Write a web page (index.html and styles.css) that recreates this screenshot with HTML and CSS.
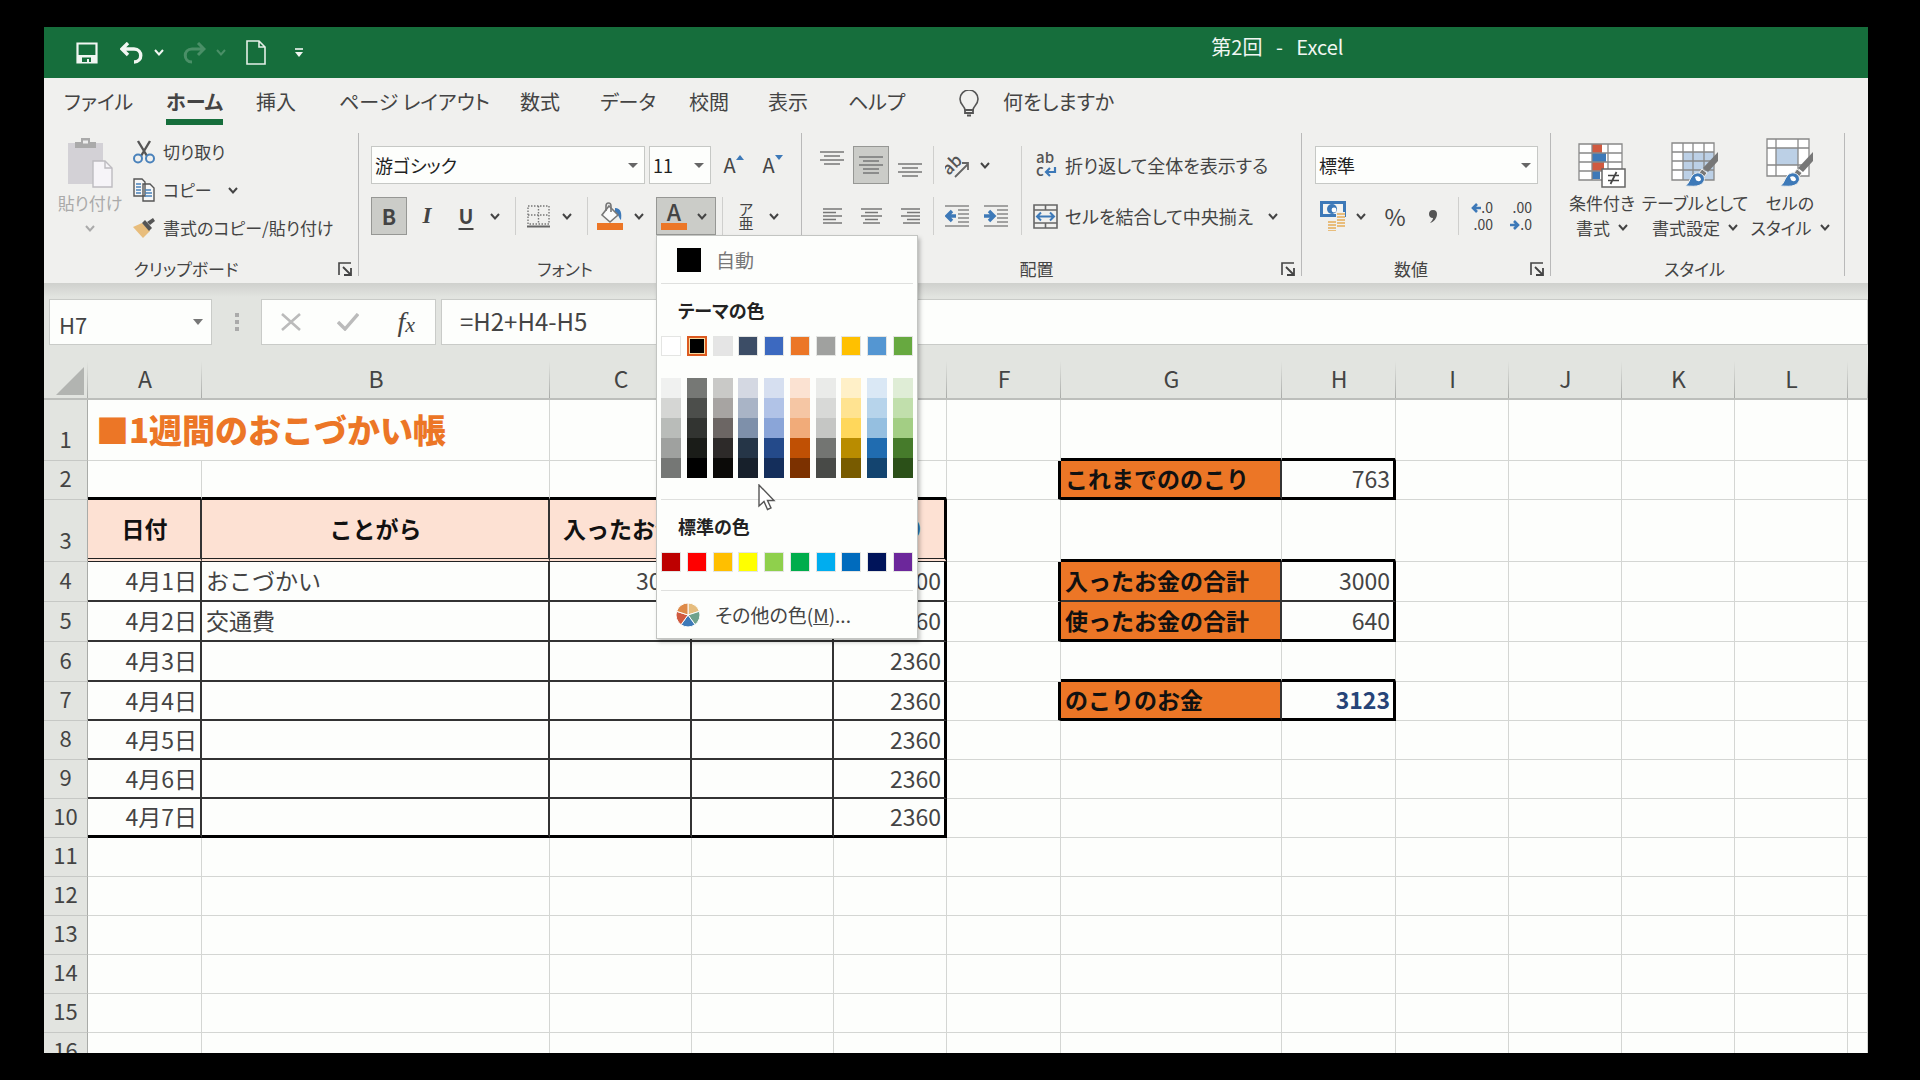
FILE: index.html
```html
<!DOCTYPE html>
<html lang="ja">
<head>
<meta charset="utf-8">
<title>第2回 - Excel</title>
<link rel="stylesheet" href="styles.css">
</head>
<body>
<svg class="defs" aria-hidden="true">
  <symbol id="chev" viewBox="0 0 10 7"><path d="M1 1l4 4.4L9 1" fill="none" stroke="currentColor" stroke-width="2"/></symbol>
  <symbol id="launch" viewBox="0 0 14 14"><path d="M1 13V1h12" fill="none" stroke="currentColor" stroke-width="1.6"/><path d="M5 5l7 7M13 6v7H6" fill="none" stroke="currentColor" stroke-width="1.8"/></symbol>
  <symbol id="brush" viewBox="0 0 36 36"><path d="M35 0v9L25 20l-5-4z" fill="#777"/><path d="M19 17l5 4-3 4-5-4z" fill="#777" stroke="#f0f0ee"/><path d="M2 34c4-2 4-6 7-10 3-4 8-4 11-1 3 4 1 8-3 10-4 2-9 1-15 1z" fill="#3d79b8" stroke="#f0f0ee"/><path d="M12 25c3-2 6 0 6 3-2 2-4 1-5 0z" fill="#fff"/></symbol>
</svg>
<div class="app">
  <header class="titlebar">
    <div class="quick">
      <button aria-label="上書き保存"><svg width="22" height="22" viewBox="0 0 22 22"><path d="M1.5 1.5h19v19h-19z" fill="none" stroke="#f1f6f2" stroke-width="2.2"/><path d="M1 13h20v8H1z" fill="#f1f6f2"/><path d="M6 15.500h9V20h-2v-3h-2v3H6z" fill="#166e3c"/></svg></button>
      <button aria-label="元に戻す"><svg width="24" height="22" viewBox="0 0 24 22"><path d="M8 1L2 7l6 6M2 7h12c9 0 9 13 0 13" fill="none" stroke="#f1f6f2" stroke-width="3.4"/></svg></button>
      <button aria-label="元に戻すの一覧"><svg width="10" height="7"><use href="#chev"/></svg></button>
      <button aria-label="やり直し" class="off"><svg width="24" height="22" viewBox="0 0 24 22"><path d="M16 1l6 6-6 6M22 7H10C1 7 1 20 10 20" fill="none" stroke="currentColor" stroke-width="3"/></svg></button>
      <button aria-label="やり直しの一覧" class="off"><svg width="10" height="7"><use href="#chev"/></svg></button>
      <button aria-label="新規作成"><svg width="20" height="25" viewBox="0 0 20 25"><path d="M1 1h12l6 6v17H1zM13 1v6h6" fill="none" stroke="#e4efe7" stroke-width="1.6"/></svg></button>
      <button aria-label="クイック アクセス ツール バーのユーザー設定"><svg width="8" height="9" viewBox="0 0 8 9"><path d="M0 1h8" stroke="#f1f6f2" stroke-width="1.600"/><path d="M0 4h8L4 9z" fill="#f1f6f2"/></svg></button>
    </div>
    <h1 class="doc">第2回 &nbsp;&nbsp;-&nbsp;&nbsp; Excel</h1>
  </header>

  <nav class="tabs">
    <a href="#">ファイル</a><a href="#" class="on">ホーム</a><a href="#">挿入</a><a href="#">ページ レイアウト</a><a href="#">数式</a><a href="#">データ</a><a href="#">校閲</a><a href="#">表示</a><a href="#">ヘルプ</a>
    <svg width="20" height="27" viewBox="0 0 20 27"><path d="M6 20c0-4-5-5-5-11a9 9 0 0118 0c0 6-5 7-5 11z" fill="none" stroke="#555" stroke-width="1.600"/><path d="M6 20h8v3H6zM8 25.500h4" fill="none" stroke="#555" stroke-width="1.800"/></svg>
    <a href="#">何をしますか</a>
  </nav>

  <div class="ribbon">
    <section class="group clip">
      <div class="clip-body">
        <button class="paste">
          <svg width="45" height="50" viewBox="0 0 45 50"><path d="M0 5h35v41H0z" fill="#d3d1d6"/><path d="M7 10V4h6V0h9v4h6v6z" fill="#aaa"/><path d="M15 2.500h5v3h-5z" fill="#eee"/><path d="M25 23h12l7 7v19H25z" fill="#f6f4f8" stroke="#bdbbc0" stroke-width="1.400"/><path d="M37 23v7h7" fill="none" stroke="#bdbbc0" stroke-width="1.400"/></svg>
          <span>貼り付け</span>
          <svg width="10" height="7"><use href="#chev"/></svg>
        </button>
        <div class="clip-list">
          <button><svg width="22" height="24" viewBox="0 0 22 24"><path d="M5 1l9 15M17 1L8 16" stroke="#555" stroke-width="2.400"/><circle cx="5" cy="18.500" r="4" fill="none" stroke="#4a82bb" stroke-width="2"/><circle cx="17" cy="18.500" r="4" fill="none" stroke="#4a82bb" stroke-width="2"/></svg><span>切り取り</span></button>
          <button><svg width="22" height="24" viewBox="0 0 22 24"><path d="M1 1h8l3 3v14H1zM10 6h7l4 4v13H10z" fill="#f7f7f7" stroke="#555" stroke-width="1.400"/><path d="M3 6h5M3 9h5M3 12h5M3 15h5M12 12h6M12 15h7M12 18h7" stroke="#4a82bb" stroke-width="1.400"/></svg><span>コピー</span><svg class="gapped" width="10" height="7"><use href="#chev"/></svg></button>
          <button><svg width="22" height="20" viewBox="0 0 22 20"><path d="M0 9l9-4 8 8-7 7z" fill="#e8bd7c"/><path d="M9 5l3-3 7 8-3 3z" fill="#555"/><path d="M14 4l6-4 2 3-5 4z" fill="#555"/></svg><span>書式のコピー/貼り付け</span></button>
        </div>
      </div>
      <footer><span>クリップボード</span><button aria-label="クリップボードの設定"><svg width="14" height="14"><use href="#launch"/></svg></button></footer>
    </section>

    <section class="group font">
      <div class="row font-top">
        <label class="combo"><select aria-label="フォント"><option>游ゴシック</option></select></label>
        <label class="combo"><select aria-label="フォント サイズ"><option>11</option></select></label>
        <button class="letter" aria-label="フォント サイズの拡大"><span>A</span><svg width="8" height="6" viewBox="0 0 8 6"><path d="M0 5l4-5 4 5z" fill="#3d79b8"/></svg></button>
        <button class="letter" aria-label="フォント サイズの縮小"><span>A</span><svg width="8" height="6" viewBox="0 0 8 6"><path d="M0 0l4 5 4-5z" fill="#3d79b8"/></svg></button>
      </div>
      <div class="row font-low">
        <button class="pressed bold">B</button>
        <button class="italic">I</button>
        <button class="under">U</button>
        <button aria-label="下線の種類"><svg width="10" height="7"><use href="#chev"/></svg></button>
        <i class="sep"></i>
        <button aria-label="罫線"><svg width="23" height="23" viewBox="0 0 23 23"><path d="M1 1h21v18H1zM11.500 1v18M1 10h21" fill="none" stroke="#777" stroke-width="1.400" stroke-dasharray="1.500 1.500"/><path d="M0 21.500h23" stroke="#666" stroke-width="2"/></svg></button>
        <button aria-label="罫線の種類"><svg width="10" height="7"><use href="#chev"/></svg></button>
        <i class="sep"></i>
        <button aria-label="塗りつぶしの色"><svg width="26" height="28" viewBox="0 0 26 28"><path d="M18 6c6 0 7 5 6 12-3-3-2-6-6-8z" fill="#3d79b8"/><path d="M12 4l9 9-8 7-8-7z" fill="#fafafa" stroke="#777" stroke-width="1.600"/><path d="M9 9V4c0-4 5-4 5 0v6" fill="none" stroke="#777" stroke-width="1.600"/><path d="M0 21h26v7H0z" fill="#ec7626"/></svg></button>
        <button class="fill-more" aria-label="塗りつぶしの色の一覧"><svg width="10" height="7"><use href="#chev"/></svg></button>
        <div class="picker">
          <button class="pressed fontcolor" aria-label="フォントの色"><span>A</span><svg width="10" height="7"><use href="#chev"/></svg></button>
          <div class="menu">
            <button class="item auto"><i class="black"></i><span>自動</span></button>
            <h2>テーマの色</h2>
            <div class="swatches" id="theme"></div>
            <div class="shades" id="shades"></div>
            <h2 class="ruled">標準の色</h2>
            <div class="swatches" id="standard"></div>
            <button class="item more"><svg width="24" height="26" viewBox="-12 -13 24 26" stroke="#fdfefc" stroke-width="1"><path d="M0 0V-12A12 12 0 0111.400-3.700z" fill="#e6bd7e"/><path d="M0 0L11.400-3.700A12 12 0 017 9.700z" fill="#6fa28c"/><path d="M0 0L7 9.700A12 12 0 01-7 9.700z" fill="#3d79b8"/><path d="M0 0L-7 9.700A12 12 0 01-11.400-3.700z" fill="#d05a40"/><path d="M0 0L-11.400-3.700A12 12 0 010-12z" fill="#de8a48"/></svg><span>その他の色(<u>M</u>)...</span></button>
            <svg class="cursor" width="18" height="27" viewBox="0 0 18 27"><path d="M1 1v21l5-4.500 3.500 8 3.500-1.500-3.500-7.500H16z" fill="#fff" stroke="#555" stroke-width="1.400"/></svg>
          </div>
        </div>
        <i class="sep"></i>
        <button class="ruby" aria-label="ふりがな"><span>ア</span><span>亜</span></button>
        <button aria-label="ふりがなの一覧"><svg width="10" height="7"><use href="#chev"/></svg></button>
      </div>
      <footer><span>フォント</span></footer>
    </section>

    <section class="group align">
      <div class="align-body">
        <div class="align-left">
          <div class="row align-top">
            <button aria-label="上揃え"><svg class="up" width="24" height="14" viewBox="0 0 24 14"><path d="M0 1h24M4 5h16M0 9h24M4 13h16" stroke="#777" stroke-width="1.600"/></svg></button>
            <button class="pressed" aria-label="上下中央揃え"><svg width="24" height="20" viewBox="0 0 24 20"><path d="M0 2h24M4 6h16M0 10h24M4 14h16M4 18h16" stroke="#777" stroke-width="1.600"/></svg></button>
            <button aria-label="下揃え"><svg class="down" width="24" height="14" viewBox="0 0 24 14"><path d="M0 1h24M4 5h16M0 9h24M4 13h16" stroke="#777" stroke-width="1.600"/></svg></button>
            <i class="sep"></i>
            <button aria-label="方向"><svg width="25" height="26" viewBox="0 0 25 26"><text x="-2" y="18" transform="rotate(-45 8 14)" font-size="17" font-weight="500" fill="#555">ab</text><path d="M10 25L23 12M23 18v-7h-6" fill="none" stroke="#666" stroke-width="1.800"/></svg></button>
            <button aria-label="方向の一覧"><svg width="10" height="7"><use href="#chev"/></svg></button>
          </div>
          <div class="row align-low">
            <button aria-label="左揃え"><svg width="19" height="16" viewBox="0 0 19 16"><path d="M0 1h19M0 4.500h13M0 8h19M0 11.500h13M0 15h19" stroke="#777" stroke-width="1.500"/></svg></button>
            <button aria-label="中央揃え"><svg width="21" height="16" viewBox="0 0 21 16"><path d="M0 1h21M4 4.500h13M0 8h21M4 11.500h13M2 15h17" stroke="#777" stroke-width="1.500"/></svg></button>
            <button aria-label="右揃え"><svg width="19" height="16" viewBox="0 0 19 16"><path d="M0 1h19M6 4.500h13M0 8h19M6 11.500h13M2 15h17" stroke="#777" stroke-width="1.500"/></svg></button>
            <i class="sep"></i>
            <button aria-label="インデントを減らす"><svg width="24" height="22" viewBox="0 0 24 22"><path d="M0 1h24M13 5h11M13 9h11M13 13h11M13 17h11M0 21h24" stroke="#888" stroke-width="1.600"/><path d="M11 11H3M7 6l-5 5 5 5" fill="none" stroke="#3d79b8" stroke-width="3.400"/></svg></button>
            <button aria-label="インデントを増やす"><svg width="24" height="22" viewBox="0 0 24 22"><path d="M0 1h24M13 5h11M13 9h11M13 13h11M13 17h11M0 21h24" stroke="#888" stroke-width="1.600"/><path d="M0 11h8M5 6l5 5-5 5" fill="none" stroke="#3d79b8" stroke-width="3.400"/></svg></button>
          </div>
        </div>
        <div class="align-right">
          <button class="row"><svg width="25" height="26" viewBox="0 0 25 26"><text x="3" y="11" font-size="15" font-weight="500" fill="#555">ab</text><text x="3" y="24" font-size="15" font-weight="500" fill="#555">c</text><path d="M22 15v5h-8M17 16l-4 4 4 4" fill="none" stroke="#3d79b8" stroke-width="2.200"/></svg><span>折り返して全体を表示する</span></button>
          <button class="row"><svg width="25" height="25" viewBox="0 0 25 25"><path d="M1 1h23v23H1zM1 6h23M1 19h23M12.500 1v5M12.500 19v5" fill="none" stroke="#666" stroke-width="1.600"/><path d="M4 12.500h17M8 8.500l-4 4 4 4M17 8.500l4 4-4 4" fill="none" stroke="#3d79b8" stroke-width="2"/></svg><span>セルを結合して中央揃え</span><svg class="gapped" width="10" height="7"><use href="#chev"/></svg></button>
        </div>
      </div>
      <footer><span>配置</span><button aria-label="配置の設定"><svg width="14" height="14"><use href="#launch"/></svg></button></footer>
    </section>

    <section class="group number">
      <div class="row"><label class="combo wide"><select aria-label="表示形式"><option>標準</option></select></label></div>
      <div class="row number-low">
        <button aria-label="通貨表示形式"><svg width="26" height="30" viewBox="0 0 26 30"><path d="M0 0h26v16H0z" fill="#3d79b8"/><path d="M3 3h20v10H3z" fill="#f4f4f2"/><circle cx="12" cy="8" r="5" fill="#3d79b8"/><circle cx="14" cy="9" r="2.400" fill="#fff"/><path d="M16 11h9v18H8V19h8z" fill="#f0f0ee"/><path d="M17 13h8M17 16h8M17 19h8M8 21h8M8 24h8M8 27h8M8 30h8M17 22h8M17 25h8" stroke="#e8bd7c" stroke-width="2.200"/></svg></button>
        <button aria-label="通貨の種類"><svg width="10" height="7"><use href="#chev"/></svg></button>
        <button class="pct">%</button>
        <button class="comma" aria-label="桁区切りスタイル"><svg width="8" height="13" viewBox="0 0 8 13"><path d="M4 0c3 0 4 2 4 4 0 4-3 8-7 9 2-2 3-4 3-5C1 8 0 6 0 4s1-4 4-4z" fill="#555"/></svg></button>
        <i class="sep"></i>
        <button class="dec"><span><svg width="10" height="10" viewBox="0 0 10 10"><path d="M10 5H2M6 1L2 5l4 4" fill="none" stroke="#3d79b8" stroke-width="2.600"/></svg>.0</span><span>.00</span></button>
        <button class="dec"><span>.00</span><span><svg width="10" height="10" viewBox="0 0 10 10"><path d="M0 5h8M4 1l4 4-4 4" fill="none" stroke="#3d79b8" stroke-width="2.600"/></svg>.0</span></button>
      </div>
      <footer><span>数値</span><button aria-label="数値の設定"><svg width="14" height="14"><use href="#launch"/></svg></button></footer>
    </section>

    <section class="group styles">
      <div class="styles-body">
        <button><svg width="48" height="50" viewBox="0 0 48 50"><path d="M1 6h43v36H1z" fill="#fff"/><path d="M14 6h10v9H14zM14 24h12v9H14z" fill="#d05a40"/><path d="M14 15h14v9H14zM14 33h8v8h-8z" fill="#3d79b8"/><path d="M1 6h43v36H1zM1 15h43M1 24h43M1 33h43M14 6v36M30 6v36" fill="none" stroke="#888" stroke-width="1.300"/><path d="M24 31h23v18H24z" fill="#fff" stroke="#666" stroke-width="1.500"/><path d="M30 37.500h11M30 42.500h11M38.500 34l-6 12" stroke="#444" stroke-width="1.700"/></svg><span>条件付き</span><span>書式<svg width="10" height="7"><use href="#chev"/></svg></span></button>
        <button><svg width="48" height="50" viewBox="0 0 48 50"><path d="M1 5h42v37H1z" fill="#fff"/><path d="M12 14h31v28H12z" fill="#bcd0e6"/><path d="M1 5h42v37H1zM1 14h42M1 23h42M1 32h42M12 5v37M22 5v37M33 5v37" fill="none" stroke="#888" stroke-width="1.300"/><use href="#brush" x="12" y="14" width="36" height="36"/></svg><span>テーブルとして</span><span>書式設定<svg width="10" height="7"><use href="#chev"/></svg></span></button>
        <button><svg width="48" height="50" viewBox="0 0 48 50"><path d="M1 1h42v37H1z" fill="#fff"/><path d="M10 10h22v17H10z" fill="#bcd0e6"/><path d="M1 1h42v37H1zM1 10h42M1 27h42M10 1v37M32 1v37" fill="none" stroke="#888" stroke-width="1.300"/><use href="#brush" x="12" y="14" width="36" height="36"/></svg><span>セルの</span><span>スタイル<svg width="10" height="7"><use href="#chev"/></svg></span></button>
      </div>
      <footer><span>スタイル</span></footer>
    </section>
  </div>

  <div class="formula">
    <div class="namebox"><input aria-label="名前ボックス" value="H7"><svg width="10" height="6" viewBox="0 0 10 6"><path d="M0 0h10L5 6z" fill="#777"/></svg></div>
    <svg class="dots" width="4" height="18" viewBox="0 0 4 18"><path d="M0 0h4v4H0zM0 7h4v4H0zM0 14h4v4H0z" fill="#aaa"/></svg>
    <div class="fx">
      <button aria-label="キャンセル"><svg width="20" height="18" viewBox="0 0 20 18"><path d="M1 1l18 16M19 1L1 17" stroke="#bbb" stroke-width="2.600"/></svg></button>
      <button aria-label="入力"><svg width="22" height="18" viewBox="0 0 22 18"><path d="M1 9l7 7L21 1" fill="none" stroke="#bbb" stroke-width="3.400"/></svg></button>
      <button class="fn" aria-label="関数の挿入">f<small>x</small></button>
    </div>
    <input class="expr" aria-label="数式バー" value="=H2+H4-H5">
  </div>

  <main class="sheet">
    <table>
      <colgroup><col class="c-head"><col class="c-std"><col class="c-b"><col class="c-mid"><col class="c-mid"><col class="c-slim"><col class="c-std"><col class="c-g"><col class="c-std"><col class="c-slim"><col class="c-slim"><col class="c-slim"><col class="c-slim"><col></colgroup>
      <thead>
        <tr><th class="corner"><svg width="28" height="28" viewBox="0 0 28 28"><path d="M28 0v28H0z" fill="#b2b4b1"/></svg></th><th>A</th><th>B</th><th>C</th><th>D</th><th>E</th><th>F</th><th>G</th><th>H</th><th>I</th><th>J</th><th>K</th><th>L</th><th></th></tr>
      </thead>
      <tbody>
        <tr class="r-title"><th>1</th><td colspan="2" class="title">■1週間のおこづかい帳</td><td></td><td></td><td></td><td></td><td class="edge-b"></td><td class="edge-b"></td><td></td><td></td><td></td><td></td><td></td></tr>
        <tr><th>2</th><td class="edge-b"></td><td class="edge-b"></td><td class="edge-b"></td><td class="edge-b"></td><td class="edge-b"></td><td class="edge-r"></td><td class="tag edge-b line-r">これまでののこり</td><td class="num edge-b edge-r">763</td><td></td><td></td><td></td><td></td><td></td></tr>
        <tr class="r-head"><th>3</th><td class="head line-r">日付</td><td class="head line-r">ことがら</td><td class="head line-r">入ったお金</td><td class="head line-r">使ったお金</td><td class="head edge-r blue">のこり</td><td></td><td class="edge-b"></td><td class="edge-b"></td><td></td><td></td><td></td><td></td><td></td></tr>
        <tr class="r-tall led"><th>4</th><td class="num">4月1日</td><td>おこづかい</td><td class="num">3000</td><td></td><td class="num">3000</td><td class="edge-r"></td><td class="tag line-b line-r">入ったお金の合計</td><td class="num line-b edge-r">3000</td><td></td><td></td><td></td><td></td><td></td></tr>
        <tr class="r-tall led"><th>5</th><td class="num">4月2日</td><td>交通費</td><td></td><td class="num">640</td><td class="num">2360</td><td class="edge-r"></td><td class="tag edge-b line-r">使ったお金の合計</td><td class="num edge-b edge-r">640</td><td></td><td></td><td></td><td></td><td></td></tr>
        <tr class="r-tall led"><th>6</th><td class="num">4月3日</td><td></td><td></td><td></td><td class="num">2360</td><td></td><td class="edge-b"></td><td class="edge-b"></td><td></td><td></td><td></td><td></td><td></td></tr>
        <tr class="led"><th>7</th><td class="num">4月4日</td><td></td><td></td><td></td><td class="num">2360</td><td class="edge-r"></td><td class="tag edge-b line-r">のこりのお金</td><td class="num edge-b edge-r total">3123</td><td></td><td></td><td></td><td></td><td></td></tr>
        <tr class="led"><th>8</th><td class="num">4月5日</td><td></td><td></td><td></td><td class="num">2360</td><td></td><td></td><td></td><td></td><td></td><td></td><td></td><td></td></tr>
        <tr class="led"><th>9</th><td class="num">4月6日</td><td></td><td></td><td></td><td class="num">2360</td><td></td><td></td><td></td><td></td><td></td><td></td><td></td><td></td></tr>
        <tr class="led last"><th>10</th><td class="num">4月7日</td><td></td><td></td><td></td><td class="num">2360</td><td></td><td></td><td></td><td></td><td></td><td></td><td></td><td></td></tr>
        <tr><th>11</th><td></td><td></td><td></td><td></td><td></td><td></td><td></td><td></td><td></td><td></td><td></td><td></td><td></td></tr>
        <tr><th>12</th><td></td><td></td><td></td><td></td><td></td><td></td><td></td><td></td><td></td><td></td><td></td><td></td><td></td></tr>
        <tr><th>13</th><td></td><td></td><td></td><td></td><td></td><td></td><td></td><td></td><td></td><td></td><td></td><td></td><td></td></tr>
        <tr><th>14</th><td></td><td></td><td></td><td></td><td></td><td></td><td></td><td></td><td></td><td></td><td></td><td></td><td></td></tr>
        <tr><th>15</th><td></td><td></td><td></td><td></td><td></td><td></td><td></td><td></td><td></td><td></td><td></td><td></td><td></td></tr>
        <tr><th>16</th><td></td><td></td><td></td><td></td><td></td><td></td><td></td><td></td><td></td><td></td><td></td><td></td><td></td></tr>
      </tbody>
    </table>
  </main>
</div>
<script src="palette.js"></script>
</body>
</html>
```

FILE: palette.js
```js
const theme = ['#ffffff', '#000000', '#e5e5e5', '#3c4d66', '#3c69c0', '#ec7626', '#a0a19f', '#ffc000', '#5496d2', '#67a940'];
const shades = [
  ['#f0f1f0', '#767875', '#c9c9c7', '#d4d8e2', '#d6dff0', '#fbe2d2', '#eaebe9', '#fff0c8', '#dae8f5', '#dfedd6'],
  ['#d5d6d4', '#4c4e4b', '#a7a4a2', '#a9b4c6', '#b1c3e7', '#f5c6a4', '#d8d9d7', '#ffe391', '#b7d4eb', '#c1dfac'],
  ['#b9bcb9', '#323431', '#6c6664', '#7e90aa', '#8aa5d8', '#f1ab79', '#c5c6c4', '#ffd75b', '#95bfe0', '#a3ce84'],
  ['#9fa19f', '#1a1c18', '#2d2a29', '#253547', '#244a8a', '#c05004', '#737572', '#b98c00', '#206cb0', '#467b2b'],
  ['#757775', '#000000', '#0b0a08', '#17202b', '#142e5b', '#7c3100', '#484a47', '#785b00', '#13446f', '#2b5018']
];
const standard = ['#bd0000', '#ff0000', '#ffbf00', '#ffff00', '#8fd04c', '#00ad4b', '#00adef', '#006bbd', '#00145a', '#6c279b'];

function fill(id, colors, picked) {
  const box = document.getElementById(id);
  colors.forEach((color, i) => {
    const b = document.createElement('button');
    b.style.backgroundColor = color;
    b.setAttribute('aria-label', color);
    if (i === picked) b.className = 'picked';
    box.append(b);
  });
}
fill('theme', theme, 1);
fill('shades', shades.flat());
fill('standard', standard);
```

FILE: styles.css
```css
* { box-sizing: border-box; }
body {
  margin: 0;
  height: 100vh;
  padding: 27px 52px 27px 44px;
  background: #000;
  color: #444;
  font-family: "Noto Sans CJK JP", sans-serif;
  font-size: 18px;
  line-height: 24px;
}
button, input, select { font: inherit; color: inherit; font-feature-settings: inherit; }
button { margin: 0; padding: 0; border: 0; background: none; display: flex; align-items: center; justify-content: center; white-space: nowrap; }
a { color: inherit; text-decoration: none; white-space: nowrap; }
svg { flex: none; display: block; }
.defs { position: absolute; width: 0; height: 0; }
.app { height: 100%; display: flex; flex-direction: column; overflow: hidden; background: #fdfefc; }

/* title bar */
.titlebar { flex: none; height: 51px; display: grid; grid-template-columns: 64% 1fr; background: #166e3c; color: #f1f6f2; }
.quick { display: grid; grid-template-columns: 44px 34px 28px 34px 30px 49px 20px; padding-left: 32px; align-items: center; justify-items: start; }
.quick .off { color: #4a8f67; }
.doc { margin: 0; font-size: 20px; line-height: 40px; font-weight: 400; white-space: nowrap; }

/* tabs */
.tabs { flex: none; height: 51px; padding-left: 20px; display: grid; grid-template-columns: 102px 90px 83px 181px 80px 89px 79px 80px 111px 44px 1fr; align-items: start; background: #f0f0ee; font-size: 20px; font-feature-settings: "palt"; }
.tabs a { justify-self: start; height: 47px; line-height: 48px; }
.tabs svg { margin-top: 12px; }
.tabs .on { font-weight: 700; border-bottom: 6px solid #166e3c; }

/* ribbon */
.ribbon { flex: none; display: grid; grid-template-columns: 315px 443px 500px 249px 294px 1fr; padding: 4px 0 7px; background: #f0f0ee; font-feature-settings: "palt"; }
.group { height: 143px; border-right: 1px solid #b9b9b9; display: flex; flex-direction: column; }
.group footer { margin-top: auto; height: 14px; display: grid; grid-template-columns: 1fr; align-items: center; justify-items: center; padding-right: 6px; font-size: 17px; line-height: 14px; }
.group footer > * { grid-area: 1 / 1; }
.group footer span { margin-right: 24px; }
.group footer button { justify-self: end; }
.styles footer span { margin-right: 0; }
.row { display: grid; height: 38px; align-items: stretch; }
.row + .row { margin-top: 13px; }
.pressed { background: #cbccc8; border: 1px solid #969794; }
.sep { justify-self: center; width: 1px; background: #cfcfcd; }
.combo { display: block; position: relative; height: 38px; border: 1px solid #c6c8c5; background: #fdfefc; }
.combo::after { content: ""; position: absolute; right: 6px; top: 16px; border: 5px solid transparent; border-top-color: #666; border-bottom: 0; }
.combo select { appearance: none; width: 100%; height: 100%; padding: 0 0 0 3px; border: 0; background: none; color: #222; }

.clip { font-size: 17px; }
.clip-body { display: grid; grid-template-columns: 70px 1fr; padding-left: 11px; column-gap: 8px; }
.paste { flex-direction: column; justify-content: flex-start; padding-top: 5px; color: #aaa; }
.paste span { margin: 3px 0 10px; }
.clip-list button { height: 38px; gap: 8px; }
.gapped { margin-left: 8px; }

.font, .number { padding-top: 13px; }
.font .row { padding-left: 12px; }
.font-top { grid-template-columns: 274px 62px 37px 33px; column-gap: 4px; }
.letter { font-size: 20px; align-items: flex-start; padding-top: 7px; }
.letter svg { margin-top: 2px; }
.font-low { grid-template-columns: 36px 40px 38px 20px 20px 26px 32px 8px 38px 27px 60px 12px 36px 20px; }
.font-low .bold { font-weight: 700; font-size: 21px; }
.italic { font: italic 700 23px "Liberation Serif", serif; }
.under { font-weight: 700; font-size: 20px; text-decoration: underline; text-underline-offset: 4px; }
.fill-more { padding-right: 7px; }
.ruby { flex-direction: column; font-size: 15px; line-height: 14px; }
.picker { position: relative; }
.fontcolor { width: 100%; height: 100%; justify-content: space-between; padding: 0 8px 0 4px; }
.fontcolor span { width: 26px; height: 28px; border-bottom: 7px solid #ec7626; font-size: 23px; font-weight: 500; line-height: 19px; }

/* colour menu */
.menu { position: absolute; z-index: 5; top: 38px; left: 0; width: 262px; padding: 0 4px; border: 1px solid #c3c5c2; background: #fdfefc; box-shadow: 2px 3px 4px rgba(0, 0, 0, .25); }
.item { width: 100%; justify-content: flex-start; gap: 15px; font-size: 19px; }
.auto { height: 48px; padding-left: 16px; border-bottom: 1px solid #dfe0de; color: #777; }
.black { width: 24px; height: 24px; background: #000; }
.menu h2 { margin: 0; padding-left: 17px; height: 52px; font-size: 18px; line-height: 52px; color: #222; }
.menu .ruled { margin-top: 21px; border-top: 1px solid #dfe0de; height: 53px; }
.swatches { display: grid; grid-template-columns: repeat(10, 20px); justify-content: space-between; }
.swatches button { height: 20px; border: 1px solid #e4e5e3; }
.swatches .picked { border: 2px solid #dc5a20; box-shadow: inset 0 0 0 1px #f3d9a0; }
.shades { display: grid; grid-template-columns: repeat(10, 20px); justify-content: space-between; margin-top: 22px; }
.shades button { height: 20px; }
.more { height: 48px; margin-top: 18px; padding-left: 15px; border-top: 1px solid #dfe0de; }
.cursor { position: absolute; left: 101px; top: 248px; }

.align-body { display: grid; grid-template-columns: 219px 1fr; padding-top: 13px; }
.align-left { padding-left: 11px; }
.align-top { grid-template-columns: 38px 40px 38px 8px 40px 16px; }
.align-low { grid-template-columns: 38px 40px 38px 8px 40px 38px; }
.align-top .pressed { margin: 0 2px; }
.up { margin-bottom: 14px; }
.down { margin-top: 10px; }
.align-right { border-left: 1px solid #cfcfcd; padding-left: 11px; }
.align-right .row { display: flex; align-items: center; justify-content: flex-start; gap: 7px; }

.number .row { padding-left: 13px; }
.wide { width: 223px; }
.number-low { grid-template-columns: 36px 20px 48px 28px 22px 24px 54px; }
.pct { font-size: 23px; }
.dec { flex-direction: column; font-size: 14px; line-height: 17px; }
.dec span { display: flex; align-items: center; justify-content: flex-end; width: 24px; }

.styles-body { display: grid; grid-template-columns: 84px 102px 88px; padding: 5px 0 0 9px; font-size: 17px; }
.styles-body button { flex-direction: column; }
.styles-body span { display: flex; align-items: center; gap: 8px; height: 25px; }
.styles-body button > svg { margin-bottom: 2px; }

/* formula bar */
.formula { flex: none; height: 62px; display: grid; grid-template-columns: 163px 49px 175px 1fr; padding: 16px 0 0 5px; background: linear-gradient(#cfd0cd, #e2e4e0 14px); }
.namebox, .fx, .expr { border: 1px solid #c9cbc8; background: #fdfefc; }
.namebox { display: flex; align-items: center; padding-right: 8px; }
.namebox input { min-width: 0; flex: 1; padding: 4px 0 0 9px; border: 0; background: none; font-size: 22px; }
.dots { place-self: center; }
.fx { display: grid; grid-template-columns: repeat(3, 1fr); }
.fn { font: italic 400 28px "Liberation Serif", serif; }
.fn small { font-size: 22px; margin-top: 6px; }
.expr { min-width: 0; margin-left: 5px; padding: 0 18px 3px; font-size: 24px; border-radius: 0; }

/* sheet */
.sheet { flex: 1; min-height: 0; overflow: hidden; font-size: 23px; }
table { width: 100%; table-layout: fixed; border-collapse: separate; border-spacing: 0; }
.c-head { width: 44px; }
.c-std { width: 114px; }
.c-slim { width: 113px; }
.c-b { width: 348px; }
.c-mid { width: 142px; }
.c-g { width: 221px; }
th { padding: 0; background: #e2e4e0; font-weight: 400; font-size: 22px; }
thead th { height: 55px; padding-top: 12px; border-bottom: 2px solid #bcbebb; font-size: 23px; background: linear-gradient(transparent 30%, #a9aba8) right / 1px 100% no-repeat #e2e4e0; }
.corner { padding: 18px 0 0 8px; }
.corner svg { margin-left: 4px; }
tbody th { vertical-align: bottom; padding-bottom: 11px; line-height: 22px; border-right: 1px solid #a9aba8; border-bottom: 1px solid #c6c8c5; }
tbody tr { height: 39px; }
tbody .r-title { height: 61px; }
tbody .r-head { height: 62px; }
tbody .r-tall { height: 40px; }
td { padding: 0 3px 2px 4px; border-right: 1px solid #d4d6d3; border-bottom: 1px solid #d4d6d3; white-space: nowrap; line-height: 30px; }
.title { padding-left: 8px; font-size: 33px; font-weight: 900; color: #ec7626; }
.num { text-align: right; }
.head { background: #fde1d3; border-bottom: 4px double #222; color: #111; font-weight: 700; text-align: center; }
.blue { color: #2e75b6; }
.tag { background: #ec7626; color: #111; font-weight: 700; }
.total { color: #264478; font-weight: 700; }
.led td:nth-child(-n+6) { border-right: 2px solid #333; border-bottom: 2px solid #333; }
.led td:nth-child(6) { border-right: 3px solid #000; }
.last td:nth-child(-n+6) { border-bottom: 3px solid #000; }
.edge-b { border-bottom: 3px solid #000; }
.edge-r { border-right: 3px solid #000; }
.line-r { border-right: 2px solid #333; }
.line-b { border-bottom: 2px solid #333; }
```
